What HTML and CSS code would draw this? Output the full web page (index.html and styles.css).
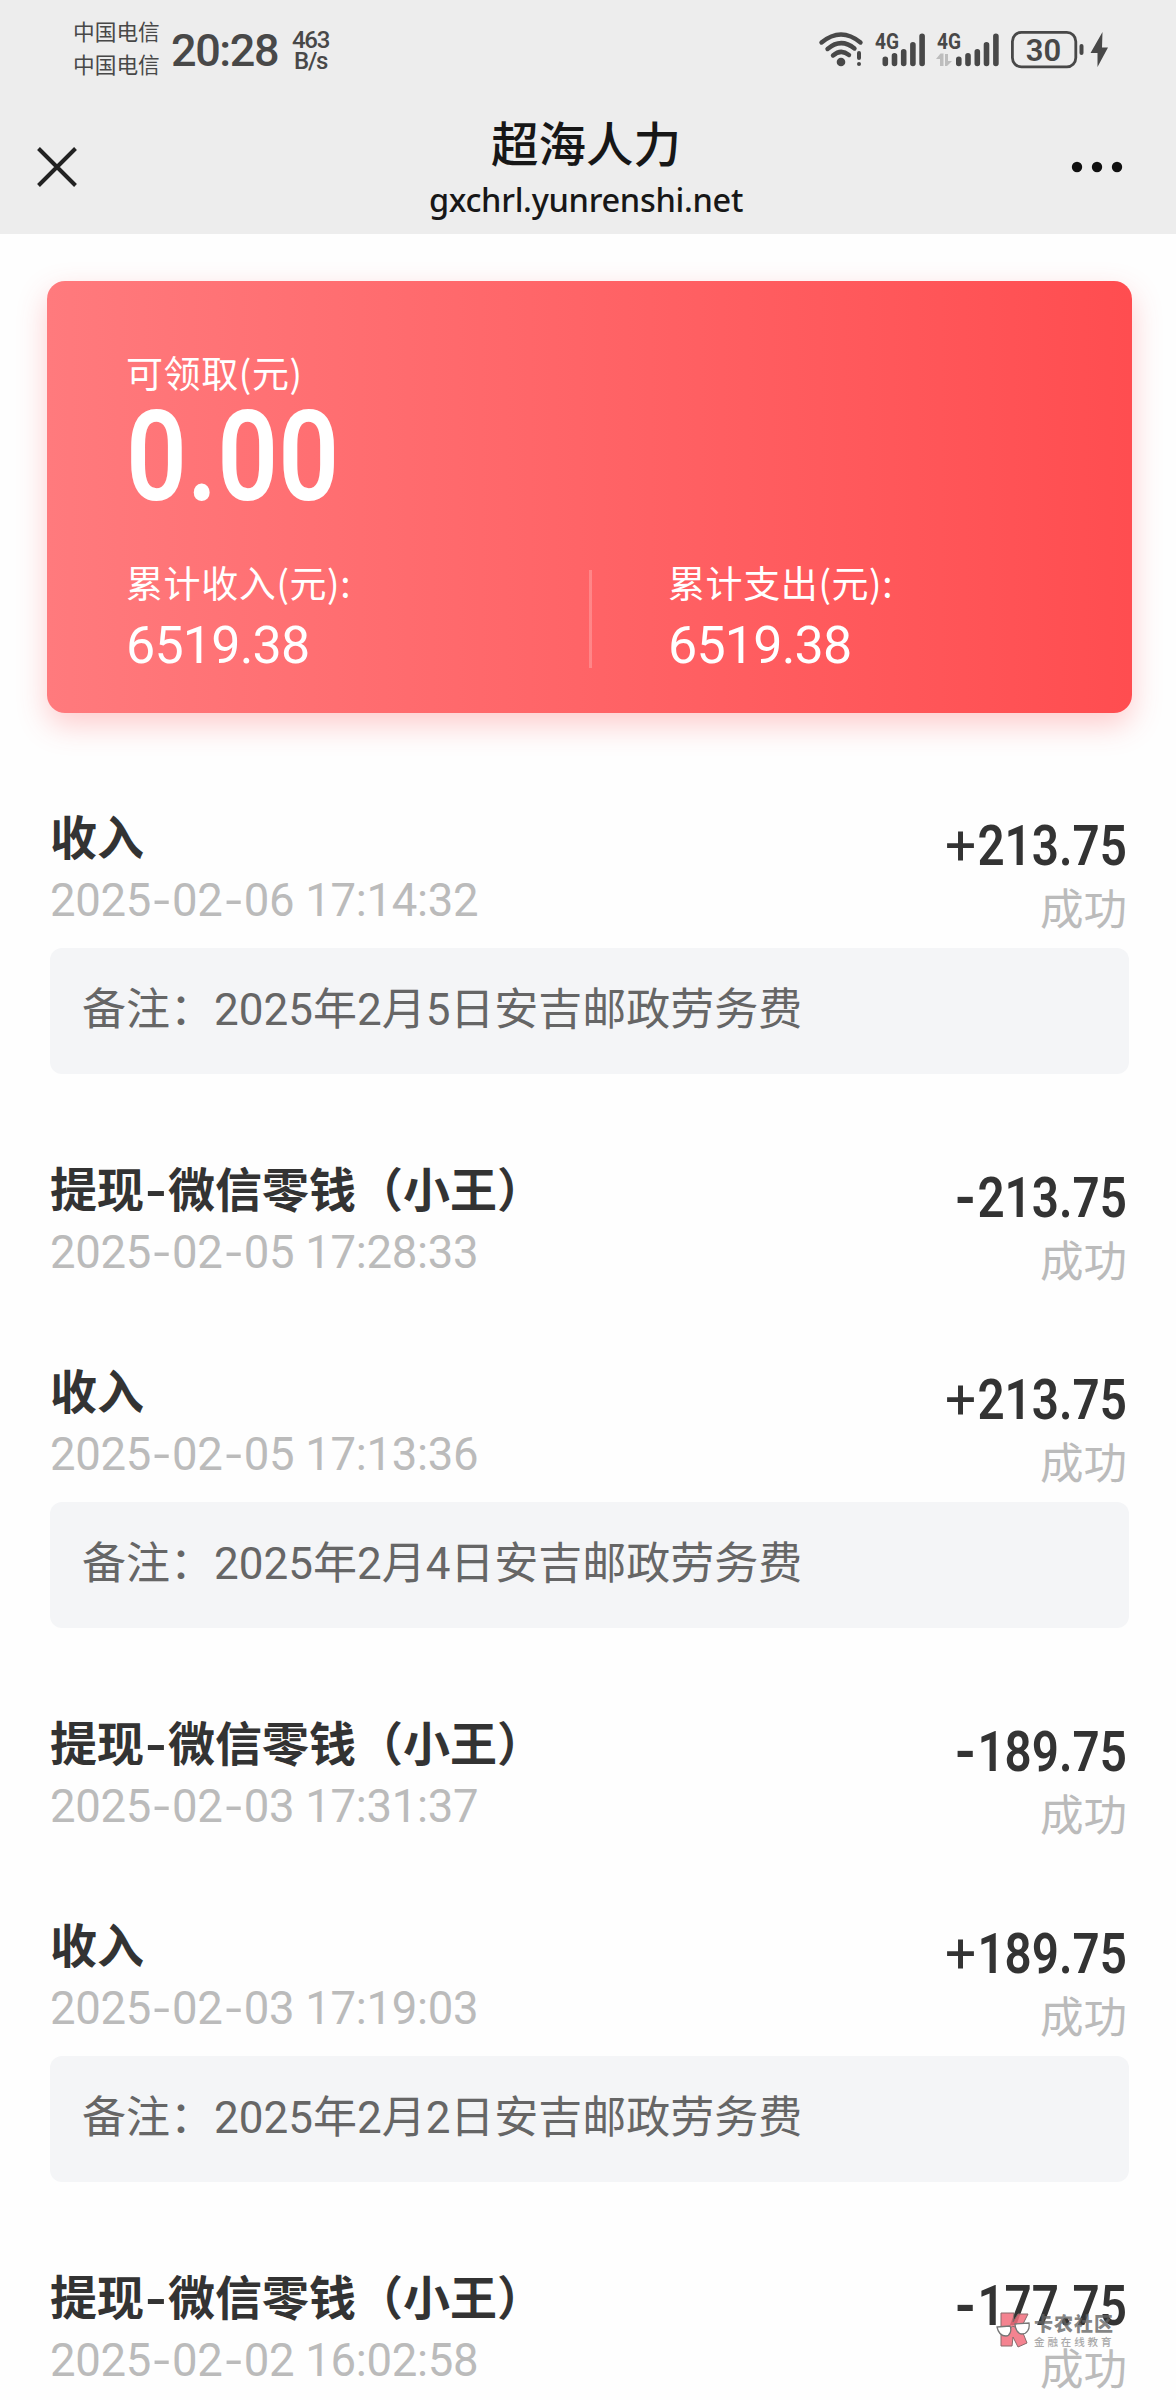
FILE: index.html
```html
<!DOCTYPE html>
<html lang="zh-CN">
<head>
<meta charset="utf-8">
<title>超海人力</title>
<link rel="stylesheet" href="styles.css">
</head>
<body>
<div class="page">
  <header class="top">
    <div class="status">
      <div class="status-left">
        <div class="carriers"><span>中国电信</span><span>中国电信</span></div>
        <div class="clock">20:28</div>
        <div class="speed"><span>463</span><span>B/s</span></div>
      </div>
      <svg class="status-icons" width="294" height="48" viewBox="0 0 294 48">
        <g fill="none" stroke="#484848" stroke-width="4.4" stroke-linecap="round">
          <path d="M3.5 19.5Q23 3.500 42.500 19.500"/>
          <path d="M9.500 26Q23 14.500 36.500 25.500"/>
          <path d="M15 32.500Q23 25.500 31 32"/>
          <path d="M41 30v5" stroke-width="4"/>
          <path d="M67.300 36.200v4.300M76.500 32.800v7.700M85.700 28.800v11.700M94.900 21.800v18.700M104.100 13.200v27.300" stroke-width="5.600"/>
          <path d="M140.800 36.200v4.300M150 32.800v7.700M159.300 28.800v11.700M168.500 21.800v18.700M177.900 13.200v27.300" stroke-width="5.600"/>
          <rect x="194.400" y="9.400" width="63.400" height="34.400" rx="9" stroke-width="2.800"/>
          <path d="M263.500 23v7" stroke-width="4"/>
        </g>
        <circle cx="23" cy="39" r="4.300" fill="#484848"/>
        <circle cx="41" cy="41" r="2" fill="#484848"/>
        <path d="M122 43V36h-4l4.500-5.500h3V43zM127 31h3v7h4l-5 5h-2z" fill="#bdbdbd"/>
        <path d="M284.500 9L272.500 30h7V44L290 24.500h-6z" fill="#484848"/>
        <text x="57" y="26" class="net" textLength="24" lengthAdjust="spacingAndGlyphs">4G</text>
        <text x="119" y="26" class="net" textLength="24" lengthAdjust="spacingAndGlyphs">4G</text>
        <text x="225.500" y="37.500" class="bat" text-anchor="middle">30</text>
      </svg>
    </div>
    <div class="nav">
      <svg class="close" width="40" height="40" viewBox="0 0 40 40"><path d="M1.500 1.500L38.500 38.500M38.500 1.500L1.500 38.500" stroke="#222" stroke-width="4"/></svg>
      <div class="nav-title"><h1>超海人力</h1><p>gxchrl.yunrenshi.net</p></div>
      <svg class="more" width="52" height="12" viewBox="0 0 52 12" fill="#111"><circle cx="6" cy="6" r="5.200"/><circle cx="26" cy="6" r="5.200"/><circle cx="46" cy="6" r="5.200"/></svg>
    </div>
  </header>

  <section class="card">
    <div class="label">可领取(元)</div>
    <div class="balance">0.00</div>
    <div class="totals">
      <div class="total"><div class="label">累计收入(元):</div><div class="sum">6519.38</div></div>
      <div class="total"><div class="label">累计支出(元):</div><div class="sum">6519.38</div></div>
    </div>
  </section>

  <ul class="list">
    <li class="item">
      <div class="head">
        <div><h2>收入</h2><time>2025<i>-</i>02<i>-</i>06 17:14:32</time></div>
        <div class="right"><div class="amount"><b class="plus">+</b><span>213.75</span></div><div class="state">成功</div></div>
      </div>
      <p class="note">备注：2025年2月5日安吉邮政劳务费</p>
    </li>
    <li class="item">
      <div class="head">
        <div><h2>提现<i>-</i>微信零钱（小王）</h2><time>2025<i>-</i>02<i>-</i>05 17:28:33</time></div>
        <div class="right"><div class="amount"><b class="minus">-</b><span>213.75</span></div><div class="state">成功</div></div>
      </div>
    </li>
    <li class="item">
      <div class="head">
        <div><h2>收入</h2><time>2025<i>-</i>02<i>-</i>05 17:13:36</time></div>
        <div class="right"><div class="amount"><b class="plus">+</b><span>213.75</span></div><div class="state">成功</div></div>
      </div>
      <p class="note">备注：2025年2月4日安吉邮政劳务费</p>
    </li>
    <li class="item">
      <div class="head">
        <div><h2>提现<i>-</i>微信零钱（小王）</h2><time>2025<i>-</i>02<i>-</i>03 17:31:37</time></div>
        <div class="right"><div class="amount"><b class="minus">-</b><span>189.75</span></div><div class="state">成功</div></div>
      </div>
    </li>
    <li class="item">
      <div class="head">
        <div><h2>收入</h2><time>2025<i>-</i>02<i>-</i>03 17:19:03</time></div>
        <div class="right"><div class="amount"><b class="plus">+</b><span>189.75</span></div><div class="state">成功</div></div>
      </div>
      <p class="note">备注：2025年2月2日安吉邮政劳务费</p>
    </li>
    <li class="item">
      <div class="head">
        <div><h2>提现<i>-</i>微信零钱（小王）</h2><time>2025<i>-</i>02<i>-</i>02 16:02:58</time></div>
        <div class="right"><div class="amount"><b class="minus">-</b><span>177.75</span></div><div class="state">成功</div></div>
      </div>
    </li>
  </ul>

  <div class="watermark">
    <svg width="35" height="36" viewBox="0 0 35 36">
      <path d="M5 1h13l-1 9 5-8h10l-7 14 6 15-9 4-5-10-1 9H5z" fill="#f26d7d" fill-opacity=".85" stroke="#8a6a6c" stroke-width="1"/>
      <path d="M1 15l13-1c2 4 0 10-4 10-5 0-8-4-9-9zM19 12l14-1c1 6-2 11-7 11-4 0-7-5-7-10z" fill="#fff" stroke="#777" stroke-width="1.300"/>
      <path d="M14 16q3-3 5-1" fill="none" stroke="#777"/>
    </svg>
    <div><div class="wm-name">卡农社区</div><div class="wm-sub">金融在线教育</div></div>
  </div>
</div>
</body>
</html>
```
FILE: styles.css
```css
* { box-sizing: border-box; margin: 0; padding: 0; }
i { font-style: normal; }
body {
  background: #fefefe;
  font-family: Roboto, "Noto Sans CJK SC", sans-serif;
  color: #333;
}
.page { position: relative; width: 1176px; height: 2400px; overflow: hidden; }

.top { height: 234px; background: #ededed; }
.status {
  height: 100px;
  padding: 0 64px 0 73px;
  display: flex;
  justify-content: space-between;
  color: #484848;
}
.status-left { display: flex; }
.carriers {
  display: flex;
  flex-direction: column;
  padding-top: 14px;
  width: 98px;
  font: 21.700px/33px "Noto Sans CJK SC", sans-serif;
}
.clock { width: 121px; font-size: 45px; font-weight: 500; line-height: 102px; letter-spacing: -1.400px; }
.speed {
  display: flex;
  flex-direction: column;
  align-items: center;
  padding-top: 30px;
  font-size: 24px;
  font-weight: 500;
  line-height: 21px;
  letter-spacing: -1.300px;
}
.status-icons { margin-top: 23px; }
.net { font: 700 22px Roboto, sans-serif; fill: #484848; }
.bat { font: 600 31px Roboto, sans-serif; fill: #484848; }

.nav {
  height: 134px;
  padding: 0 53px 0 37px;
  display: grid;
  grid-template-columns: 52px 1fr 52px;
}
.close { margin-top: 47px; }
.more { margin-top: 61px; }
.nav-title { text-align: center; color: #171717; padding-right: 16px; transform: translateX(14px); }
.nav-title h1 { font: 500 47.500px/60px "Noto Sans CJK SC", sans-serif; margin-top: 12px; }
.nav-title p { font: 500 32.500px/46px "Noto Sans", sans-serif; letter-spacing: -.3px; margin-top: 5px; }

.card {
  margin: 47px 44px 0 47px;
  height: 432px;
  padding: 67px 80px 0 79px;
  border-radius: 18px;
  background: linear-gradient(90deg, #ff7a7d, #ff4d50);
  box-shadow: 0 12px 30px rgba(255, 77, 80, .28);
  color: #fff;
}
.label { font: 37px/48px "Noto Sans CJK SC", sans-serif; letter-spacing: .6px; height: 48px; }
.balance {
  font-size: 127px;
  font-weight: 600;
  line-height: 122px;
  transform: scaleX(.84);
  transform-origin: left;
}
.totals { margin-top: 40px; display: flex; }
.total { width: 542px; flex: none; }
.total:first-child { position: relative; }
.total:first-child::after {
  content: "";
  position: absolute;
  left: 463px;
  top: 12px;
  width: 3px;
  height: 98px;
  background: rgba(255, 255, 255, .22);
}
.sum { font-size: 52px; line-height: 80px; letter-spacing: -.8px; }

.list { list-style: none; padding: 92px 47px 0 50px; }
.item { padding-bottom: 69px; }
.head { height: 133px; display: flex; justify-content: space-between; padding: 0 2px 0 0; }
.head h2 { font: 700 47px/60px "Noto Sans CJK SC", sans-serif; height: 58px; white-space: nowrap; }
.head h2 i { display: inline-block; width: 24px; text-align: center; transform: scaleX(1.250); }
.head time { display: block; font-size: 45.500px; line-height: 76px; letter-spacing: -.3px; color: #bbb; white-space: nowrap; }
.head time i { display: inline-block; width: 21px; text-align: center; transform: scaleX(1.300); }
.right { padding-top: 7px; }
.amount { display: flex; justify-content: flex-end; height: 64px; line-height: 68px; }
.amount span { font-size: 56px; font-weight: 600; transform: scaleX(.85); transform-origin: right; }
.amount b { font-size: 55px; transform: translateX(25px); }
.amount .plus { font-weight: 400; }
.amount .minus { font-weight: 700; }
.state { text-align: right; font: 43.500px/62px "Noto Sans CJK SC", sans-serif; color: #bbb; }
.note {
  margin: 10px 0 14px;
  height: 126px;
  border-radius: 12px;
  background: #f4f5f7;
  padding-left: 32px;
  font-size: 44px;
  line-height: 125px;
  color: #666;
  white-space: nowrap;
}

.watermark { position: absolute; left: 996px; top: 2312px; display: flex; gap: 3px; }
.wm-name { font: 900 19px/20px "Noto Sans CJK SC", sans-serif; letter-spacing: 1px; color: rgba(100, 100, 100, .8); height: 23px; padding-top: 1px; }
.wm-sub { font: 500 10.500px/13px "Noto Sans CJK SC", sans-serif; letter-spacing: 2.900px; color: #aaa; }
```
